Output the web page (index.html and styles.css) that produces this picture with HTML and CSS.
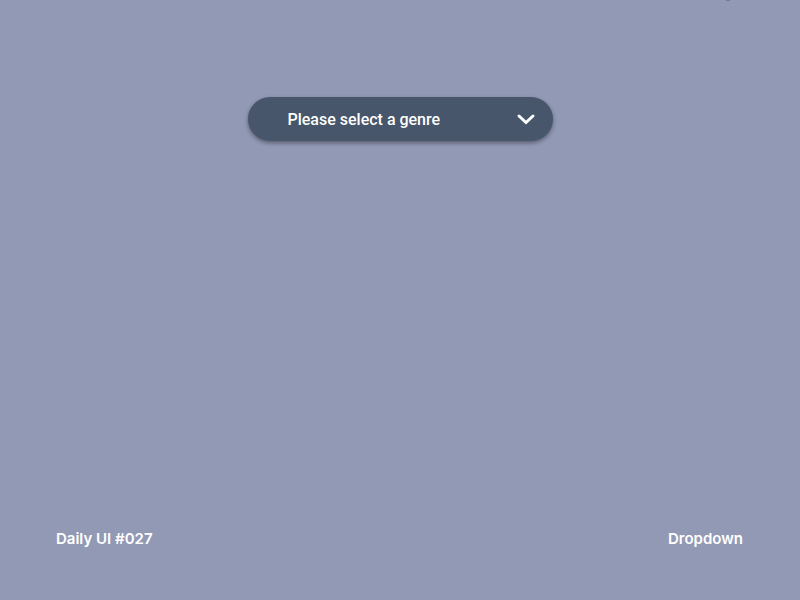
FILE: index.html
```html
<!DOCTYPE html>
<html lang="en">

<head>
    <meta charset="utf-8">
    <title>Dropdown</title>
    <link rel="stylesheet" href="styles.css">
</head>

<body>
    <div class="speck"></div>
    <main>
        <div class="dropdown">
            <select class="genre" aria-label="Genre">
                <option>Please select a genre</option>
            </select>
            <svg class="arrow" width="20" height="14" viewBox="0 0 20 14" aria-hidden="true">
                <path d="M3 3 L10 9.5 L17 3" />
            </svg>
        </div>
    </main>
    <footer>
        <span>Daily UI #027</span>
        <span>Dropdown</span>
    </footer>
</body>

</html>
```
FILE: styles.css
```css
body {
    margin: 0;
    min-height: 100vh;
    display: flex;
    flex-direction: column;
    justify-content: space-between;
    background: #9299b5;
    color: white;
    font-family: Inter, sans-serif;
}

/* small mark on the top edge */
.speck {
    position: absolute;
    top: 0;
    right: 70px;
    width: 4px;
    height: 1px;
    background: #757c98;
}

main {
    padding-top: 97px;
}

.dropdown {
    position: relative;
    width: 38%;
    min-width: 305px;
    margin: 0 auto;
}

.genre {
    display: block;
    width: 100%;
    height: 44px;
    padding: 0 56px 0 40px;
    border: 0;
    border-radius: 22px;
    appearance: none;
    background: #47566b;
    box-shadow: 0 2px 4px rgba(0, 0, 0, 0.4);
    color: white;
    font-family: Roboto, sans-serif;
    font-size: 16px;
    font-weight: 500;
}

/* drawn over the select, clicks go through to it */
.arrow {
    position: absolute;
    top: 16px;
    right: 17px;
    pointer-events: none;
    fill: none;
    stroke: white;
    stroke-width: 3;
    stroke-linecap: round;
    stroke-linejoin: miter;
}

footer {
    display: flex;
    justify-content: space-between;
    padding: 0 57px 51px 56px;
    font-size: 15px;
    line-height: 20px;
    font-weight: 600;
}
```
